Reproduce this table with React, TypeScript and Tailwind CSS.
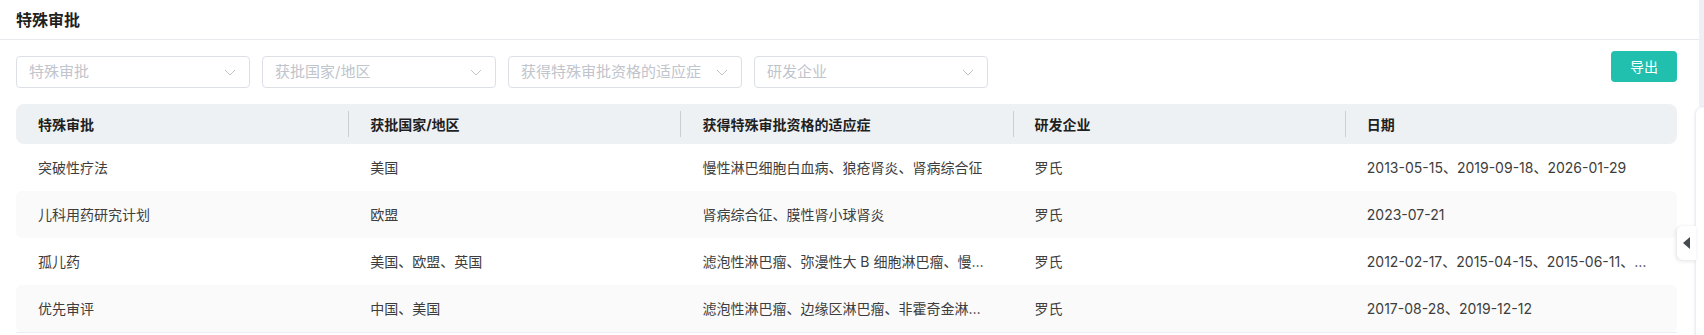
const filters = ['特殊审批', '获批国家/地区', '获得特殊审批资格的适应症', '研发企业']

const columns = ['特殊审批', '获批国家/地区', '获得特殊审批资格的适应症', '研发企业', '日期']

const rows = [
  ['突破性疗法', '美国', '慢性淋巴细胞白血病、狼疮肾炎、肾病综合征', '罗氏', '2013-05-15、2019-09-18、2026-01-29'],
  ['儿科用药研究计划', '欧盟', '肾病综合征、膜性肾小球肾炎', '罗氏', '2023-07-21'],
  ['孤儿药', '美国、欧盟、英国', '滤泡性淋巴瘤、弥漫性大 B 细胞淋巴瘤、慢性淋巴细胞白血病', '罗氏', '2012-02-17、2015-04-15、2015-06-11、2016-03-02'],
  ['优先审评', '中国、美国', '滤泡性淋巴瘤、边缘区淋巴瘤、非霍奇金淋巴瘤', '罗氏', '2017-08-28、2019-12-12'],
]

function Chevron() {
  return (
    <svg width="12" height="7" viewBox="0 0 12 7" fill="none" className="shrink-0">
      <polyline points="1,1 6,6 11,1" stroke="#c0c4cc" strokeWidth="1" />
    </svg>
  )
}

export default function App() {
  return (
    <div className="relative w-[1704px] h-[335px] overflow-hidden bg-white font-['Inter','Noto_Sans_CJK_SC',sans-serif]">
      <div className="pr-[27px]">
        {/* Title */}
        <div className="h-[40px] border-b border-[#e8eaee] flex items-center pl-4 -mr-[27px]">
          <span className="text-[16px] font-bold text-[#1f1f1f]">特殊审批</span>
        </div>

        {/* Filters */}
        <div className="flex items-start justify-between pl-4">
          <div className="flex gap-3 mt-4">
            {filters.map((f) => (
              <div
                key={f}
                className="w-[234px] h-[32px] border border-[#dcdfe6] rounded-[4px] flex items-center justify-between pl-3 pr-[13px]"
              >
                <span className="text-[15px] text-[#c0c4cc] truncate">{f}</span>
                <Chevron />
              </div>
            ))}
          </div>
          <button className="mt-[11px] w-[66px] h-[31px] rounded-[4px] bg-[#20bfae] text-white text-[14px]">
            导出
          </button>
        </div>

        {/* Table */}
        <div className="mt-4 ml-4">
          <div className="grid grid-cols-5 h-[40px] bg-[#eef1f3] rounded-lg">
            {columns.map((c, i) => (
              <div key={c} className="flex items-center">
                {i > 0 && <div className="w-px h-[26px] bg-[#c9d0d2]" />}
                <span className={`text-[14px] font-bold text-[#1f1f1f] ${i > 0 ? 'pl-[21px]' : 'pl-[22px]'}`}>{c}</span>
              </div>
            ))}
          </div>
          <div className="border-b border-[#ebeef2]">
            {rows.map((r, ri) => (
              <div
                key={ri}
                className={`grid grid-cols-5 h-[47px] rounded-md ${ri % 2 === 1 ? 'bg-[#fafafa]' : 'bg-white'}`}
              >
                {r.map((cell, ci) => (
                  <div key={ci} className={`flex items-center pl-[22px] min-w-0 ${ci === 4 ? 'pr-[28px]' : 'pr-[22px]'}`}>
                    <span className="text-[14px] text-[#3d3d3d] truncate">{cell}</span>
                  </div>
                ))}
              </div>
            ))}
          </div>
        </div>
      </div>

      {/* right edge: scroll track and collapsed side panel */}
      <div className="absolute right-0 top-0 w-[5px] h-[107px] bg-[#eef0f4]" />
      <div className="absolute left-[1696px] top-[108px] w-[20px] h-[240px] bg-white rounded-tl-md shadow-[-1px_0_3px_rgba(0,40,120,0.12)]" />
      <div className="absolute left-[1677px] top-[226px] w-[19px] h-[34px] bg-white rounded-l-md shadow-[-1px_1px_4px_rgba(0,0,0,0.12)] flex items-center justify-center">
        <svg width="8" height="12" viewBox="0 0 8 12">
          <polygon points="7,0 7,12 0,6" fill="#454a50" />
        </svg>
      </div>
    </div>
  )
}
